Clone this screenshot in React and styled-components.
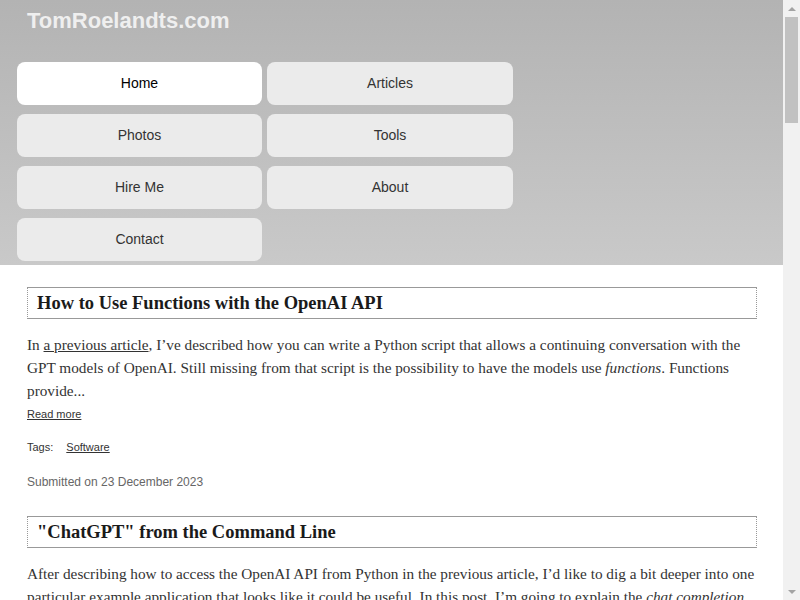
import React from 'react'
import styled, { createGlobalStyle } from 'styled-components'

const GlobalStyle = createGlobalStyle`
  html, body {
    margin: 0;
    padding: 0;
    background: #fff;
    height: 100%;
    overflow: hidden;
  }
  #root {
    height: 100%;
  }
`

const navItems = [
  { label: 'Home', active: true },
  { label: 'Articles' },
  { label: 'Photos' },
  { label: 'Tools' },
  { label: 'Hire Me' },
  { label: 'About' },
  { label: 'Contact' },
]

const App = () => {
  return (
    <Window>
      <GlobalStyle />
      <Viewport>
        <Header>
          <SiteName>TomRoelandts.com</SiteName>
          <Nav>
            {navItems.map((item) => (
              <NavButton key={item.label} $active={item.active}>{item.label}</NavButton>
            ))}
          </Nav>
        </Header>
        <Main>
          <Article>
            <Title>How to Use Functions with the OpenAI API</Title>
            <Body>
              In <a href="#">a previous article</a>, I’ve described how you can write a Python script that allows a continuing
              conversation with the GPT models of OpenAI. Still missing from that script is the possibility to have the
              models use <em>functions</em>. Functions provide...
            </Body>
            <ReadMore href="#">Read more</ReadMore>
            <Tags>
              <span>Tags:</span>
              <a href="#">Software</a>
            </Tags>
            <Submitted>Submitted on 23 December 2023</Submitted>
          </Article>
          <Article>
            <Title>"ChatGPT" from the Command Line</Title>
            <Body>
              After describing how to access the OpenAI API from Python in the previous article, I’d like to dig a bit
              deeper into one particular example application that looks like it could be useful. In this post, I’m going
              to explain the <em>chat completion</em> API and show how you can build a simple command line chat tool
              with it...
            </Body>
            <ReadMore href="#">Read more</ReadMore>
            <Tags>
              <span>Tags:</span>
              <a href="#">Software</a>
            </Tags>
            <Submitted>Submitted on 16 December 2023</Submitted>
          </Article>
        </Main>
      </Viewport>
      <ScrollBar>
        <ArrowButton><Arrow $dir="up" /></ArrowButton>
        <Thumb />
        <TrackSpace />
        <ArrowButton><Arrow $dir="down" /></ArrowButton>
      </ScrollBar>
    </Window>
  )
}

export default App

const Window = styled.div`
  display: flex;
  height: 100vh;
  overflow: hidden;
`
const Viewport = styled.div`
  flex: 1;
  min-width: 0;
  overflow: hidden;
  background: #fff;
`
const ScrollBar = styled.div`
  width: 17px;
  flex-shrink: 0;
  display: flex;
  flex-direction: column;
  background: #f1f1f1;
`
const ArrowButton = styled.div`
  height: 17px;
  display: flex;
  align-items: center;
  justify-content: center;
`
const Arrow = styled.div`
  width: 0;
  height: 0;
  border-left: 4px solid transparent;
  border-right: 4px solid transparent;
  ${(p) => (p.$dir === 'up' ? 'border-bottom: 4px solid #a3a3a3;' : 'border-top: 4px solid #a3a3a3;')}
`
const Thumb = styled.div`
  height: 106px;
  margin: 0 2px;
  background: #c1c1c1;
`
const TrackSpace = styled.div`
  flex: 1;
`
const Header = styled.header`
  background: linear-gradient(to bottom, #b3b3b3 0%, #c9c9c9 100%);
  padding: 7px 17px 4px;
`
const SiteName = styled.div`
  font-family: 'Liberation Sans', Arial, sans-serif;
  font-weight: bold;
  font-size: 22px;
  line-height: 27px;
  color: #efefef;
  padding-left: 10px;
  margin-bottom: 28px;
`
const Nav = styled.nav`
  display: grid;
  grid-template-columns: 245px 246px;
  column-gap: 5px;
  row-gap: 9px;
`
const NavButton = styled.a`
  display: flex;
  align-items: center;
  justify-content: center;
  height: 43px;
  padding-bottom: 1px;
  box-sizing: border-box;
  border-radius: 8px;
  background: ${(p) => (p.$active ? '#ffffff' : '#ebebeb')};
  color: ${(p) => (p.$active ? '#000' : '#333')};
  font-family: 'Liberation Sans', Arial, sans-serif;
  font-size: 14px;
  text-decoration: none;
  cursor: pointer;
`
const Main = styled.main`
  padding: 22px 26px 0 27px;
`
const Article = styled.article`
  margin-bottom: 27px;
`
const Title = styled.h2`
  margin: 0;
  border-top: 1px solid #999;
  border-bottom: 1px solid #999;
  border-left: 1px dotted #999;
  border-right: 1px dotted #999;
  padding: 4px 9px;
  font-family: 'Liberation Serif', Georgia, serif;
  font-weight: bold;
  font-size: 18.5px;
  line-height: 22px;
  color: #1a1a1a;
`
const Body = styled.p`
  margin: 14px 0 2px;
  font-family: 'Liberation Serif', Georgia, serif;
  font-size: 15.25px;
  line-height: 23px;
  color: #333;
  a {
    color: #333;
    text-decoration: underline;
  }
`
const ReadMore = styled.a`
  display: inline-block;
  font-family: 'Liberation Sans', Arial, sans-serif;
  font-size: 11px;
  color: #333;
  text-decoration: underline;
  margin-bottom: 21px;
`
const Tags = styled.div`
  display: flex;
  gap: 13px;
  font-family: 'Liberation Sans', Arial, sans-serif;
  font-size: 11px;
  color: #333;
  margin-bottom: 22px;
  a {
    color: #333;
    text-decoration: underline;
  }
`
const Submitted = styled.div`
  font-family: 'Liberation Sans', Arial, sans-serif;
  font-size: 12px;
  color: #666;
`
